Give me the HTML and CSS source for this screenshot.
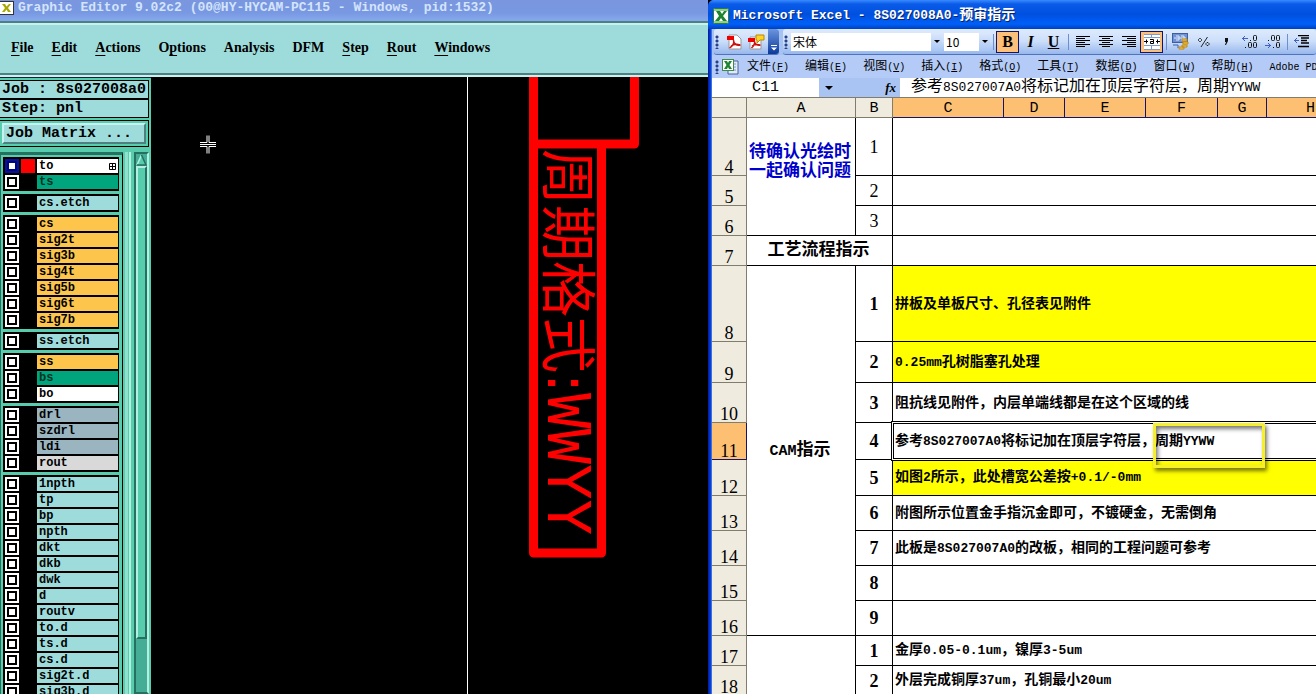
FILE: index.html
```html
<!DOCTYPE html>
<html lang="zh-CN">
<head>
<meta charset="utf-8">
<title>Graphic Editor / Microsoft Excel</title>
<link rel="stylesheet" href="styles.css">
</head>
<body>
<div class="desktop">

<section class="editor">
  <header class="editor-title">
    <svg class="x-icon" viewBox="0 0 14 14" width="14" height="14"><rect width="14" height="14" fill="#333"/><rect width="13" height="12" y="1" fill="#fff"/><path d="M2 3h3l1.500 2.500L9 3h2L8 7l3 4H8L6.500 8.500 4.500 11H2l3-4z" fill="#a8a800"/></svg>
    <span>Graphic Editor 9.02c2 (00@HY-HYCAM-PC115 - Windows, pid:1532)</span>
  </header>
  <nav class="editor-menu">
    <button><u>F</u>ile</button><button><u>E</u>dit</button><button><u>A</u>ctions</button><button>O<u>p</u>tions</button><button>Analysis</button><button>DFM</button><button><u>S</u>tep</button><button><u>R</u>out</button><button><u>W</u>indows</button>
  </nav>
  <div class="editor-body">
    <aside class="side">
      <div class="info">Job : 8s027008a0</div>
      <div class="info">Step: pnl</div>
      <div class="matrix"><button>Job Matrix ...</button></div>
      <div class="layers">
        <div class="list">
          <div class="group">
            <label class="layer active"><input type="checkbox"><i></i><span class="white">to<svg width="7" height="7" viewBox="0 0 7 7"><path d="M.5.5h6v6h-6zM3.500 0v7M0 3.500h7" fill="none" stroke="#000"/></svg></span></label>
            <label class="layer"><input type="checkbox"><i></i><span class="green">ts</span></label>
          </div>
          <div class="group">
            <label class="layer"><input type="checkbox"><i></i><span>cs.etch</span></label>
          </div>
          <div class="group">
            <label class="layer"><input type="checkbox"><i></i><span class="orange">cs</span></label>
            <label class="layer"><input type="checkbox"><i></i><span class="orange">sig2t</span></label>
            <label class="layer"><input type="checkbox"><i></i><span class="orange">sig3b</span></label>
            <label class="layer"><input type="checkbox"><i></i><span class="orange">sig4t</span></label>
            <label class="layer"><input type="checkbox"><i></i><span class="orange">sig5b</span></label>
            <label class="layer"><input type="checkbox"><i></i><span class="orange">sig6t</span></label>
            <label class="layer"><input type="checkbox"><i></i><span class="orange">sig7b</span></label>
          </div>
          <div class="group">
            <label class="layer"><input type="checkbox"><i></i><span>ss.etch</span></label>
          </div>
          <div class="group">
            <label class="layer"><input type="checkbox"><i></i><span class="orange">ss</span></label>
            <label class="layer"><input type="checkbox"><i></i><span class="green">bs</span></label>
            <label class="layer"><input type="checkbox"><i></i><span class="white">bo</span></label>
          </div>
          <div class="group">
            <label class="layer"><input type="checkbox"><i></i><span class="slate">drl</span></label>
            <label class="layer"><input type="checkbox"><i></i><span class="slate">szdrl</span></label>
            <label class="layer"><input type="checkbox"><i></i><span class="slate">ldi</span></label>
            <label class="layer"><input type="checkbox"><i></i><span class="grey">rout</span></label>
          </div>
          <div class="group">
            <label class="layer"><input type="checkbox"><i></i><span>1npth</span></label>
            <label class="layer"><input type="checkbox"><i></i><span>tp</span></label>
            <label class="layer"><input type="checkbox"><i></i><span>bp</span></label>
            <label class="layer"><input type="checkbox"><i></i><span>npth</span></label>
            <label class="layer"><input type="checkbox"><i></i><span>dkt</span></label>
            <label class="layer"><input type="checkbox"><i></i><span>dkb</span></label>
            <label class="layer"><input type="checkbox"><i></i><span>dwk</span></label>
            <label class="layer"><input type="checkbox"><i></i><span>d</span></label>
            <label class="layer"><input type="checkbox"><i></i><span>routv</span></label>
            <label class="layer"><input type="checkbox"><i></i><span>to.d</span></label>
            <label class="layer"><input type="checkbox"><i></i><span>ts.d</span></label>
            <label class="layer"><input type="checkbox"><i></i><span>cs.d</span></label>
            <label class="layer"><input type="checkbox"><i></i><span>sig2t.d</span></label>
            <label class="layer"><input type="checkbox"><i></i><span>sig3b.d</span></label>
          </div>
        </div>
        <div class="stripes"></div>
        <div class="scroll">
          <svg width="11" height="12" viewBox="0 0 11 12"><path d="M5.500 1L1 11h9z" fill="#57cdae"/><path d="M5.500 1L1 11" stroke="#b4f0e2" stroke-width="1.500"/><path d="M5.500 1L10 11H1" fill="none" stroke="#26705f" stroke-width="1.500"/></svg>
          <div class="thumb"></div>
          <div class="trough"></div>
        </div>
      </div>
    </aside>
    <div class="canvas">
      <svg width="100%" height="100%">
        <path d="M316.500 0V700" stroke="#fff"/>
        <path d="M382.500 0V476H450.500V67M378 67H483.500V0" fill="none" stroke="#f00" stroke-width="9" stroke-linejoin="round"/>
        <text class="cad" transform="translate(397 72) rotate(90)"><tspan class="han">周期格式</tspan><tspan class="colon">:</tspan><tspan class="code">WWYY</tspan></text>
        <path d="M49 65.500h7v-7M49 67.500h16M49 69.500h7v7M65 65.500h-7v-7M65 69.500h-7v7M57 58.500" fill="none" stroke="#fff"/>
      </svg>
    </div>
  </div>
</section>

<section class="excel">
  <header class="excel-title">
    <svg width="16" height="16" viewBox="0 0 16 16"><rect x=".5" y=".5" width="15" height="15" rx="1" fill="#fff" stroke="#2f7d3a"/><path d="M1 1h14v2H1zM1 13h14v2H1z" fill="#8fcf94"/><path d="M3 3h4l2 3 2-3h3l-4 5 4 5h-4l-2-3-2 3H2l4-5z" fill="#1d8430"/></svg>
    <h1><span class="lat">Microsoft Excel - 8S027008A0-</span>预审指示</h1>
  </header>
  <div class="toolbar">
    <div class="bar pdf-bar">
      <b class="grip"></b>
      <button class="tool" aria-label="PDF"><svg width="16" height="16" viewBox="0 0 16 16"><path d="M3 1h8l4 4v10H3z" fill="#fff" stroke="#999"/><path d="M1 2h7v4H1z" fill="#e00"/><path d="M7.500 6c1 3-1 6-4 8M7.500 7c1 3 3 5 7 4M5 12c3-2 6-2 9-1" fill="none" stroke="#c11" stroke-width="1.500"/></svg></button>
      <button class="tool" aria-label="PDF comment"><svg width="17" height="16" viewBox="0 0 17 16"><path d="M2 3h8l3 3v9H2z" fill="#fff" stroke="#999"/><path d="M0 4h7v4H0z" fill="#e00"/><path d="M6.500 7c1 3-1 5-3 7M6.500 8c1 2 2 4 6 3M4 12c3-2 5-2 8-1" fill="none" stroke="#c11" stroke-width="1.500"/><path d="M9 1h7v5h-4l-3 3V6H8V1z" fill="#fdd32a" stroke="#b58a00"/></svg></button>
      <button class="more" aria-label="More"><svg width="6" height="6" viewBox="0 0 6 6"><path d="M0 0h6v1H0zM0 2.500h6L3 5.500z" fill="#fff"/></svg></button>
    </div>
    <div class="bar format-bar">
      <b class="grip"></b>
      <span class="combo font"><select aria-label="Font"><option>宋体</option></select><em></em></span>
      <span class="combo size"><select aria-label="Font size"><option>10</option></select><em></em></span>
      <hr>
      <button class="tool on letter">B</button>
      <button class="tool letter italic">I</button>
      <button class="tool letter under">U</button>
      <hr>
      <button class="tool" aria-label="Left"><svg width="14" height="13" viewBox="0 0 14 13"><path d="M0 1.500h14M0 3.500h9M0 5.500h14M0 7.500h9M0 9.500h14M0 11.500h9" stroke="#000"/></svg></button>
      <button class="tool" aria-label="Center"><svg width="14" height="13" viewBox="0 0 14 13"><path d="M0 1.500h14M3 3.500h8M0 5.500h14M3 7.500h8M0 9.500h14M3 11.500h8" stroke="#000"/></svg></button>
      <button class="tool" aria-label="Right"><svg width="14" height="13" viewBox="0 0 14 13"><path d="M0 1.500h14M5 3.500h9M0 5.500h14M5 7.500h9M0 9.500h14M5 11.500h9" stroke="#000"/></svg></button>
      <button class="tool on" aria-label="Merge"><svg width="16" height="16" viewBox="0 0 16 16"><rect width="16" height="16" fill="#7f9bc8"/><path d="M0 1h7v2H0zM8 1h8v2H8zM0 4h16v7H0zM0 12h7v3H0zM8 12h8v3H8z" fill="#fff"/><path d="M0 7.500h4M12 7.500h4M2.500 5.500v4M13.500 5.500v4M6 5.500h3.500v4H6.500v-2h3" fill="none" stroke="#000"/></svg></button>
      <hr>
      <button class="tool" aria-label="Currency"><svg width="17" height="17" viewBox="0 0 17 17"><rect x=".5" y=".5" width="15" height="9" fill="#6f92d2" stroke="#3c5ea8"/><path d="M4 3h3v4H4M9 3h3v4H9M2 5h12" fill="none" stroke="#dfe9fb"/><path d="M1 12h5v3" fill="none" stroke="#3c5ea8"/><path d="M10 6h5v2h-5zM11 9h5v2h-5zM10 12h5v2h-5zM7 14h5v2H7z" fill="#f6cb45" stroke="#c28a12"/></svg></button>
      <button class="tool" aria-label="Percent"><svg width="12" height="12" viewBox="0 0 12 12"><path d="M9.500 1L3 11M1.500 2.500h1l1 1v1l-1 1h-1l-1-1v-1zM9 6.500h1l1 1v1l-1 1H9l-1-1v-1z" fill="none" stroke="#222"/></svg></button>
      <button class="tool" aria-label="Comma"><svg width="5" height="7" viewBox="0 0 5 7"><path d="M1 0h3v3L2 7H1l1-3H1z" fill="#111"/></svg></button>
      <button class="tool" aria-label="Increase decimal"><svg width="16" height="14" viewBox="0 0 16 14"><path d="M0 3.500h6M3 1L.5 3.500 3 6" fill="none" stroke="#3b62c4"/><path d="M8 5h1v1H8zM3 12h1v1H3z" fill="#111"/><rect x="11.500" y=".5" width="3" height="5" rx="1" fill="none" stroke="#111"/><rect x="6.500" y="7.500" width="3" height="5" rx="1" fill="none" stroke="#111"/><rect x="11.500" y="7.500" width="3" height="5" rx="1" fill="none" stroke="#111"/></svg></button>
      <button class="tool" aria-label="Decrease decimal"><svg width="16" height="14" viewBox="0 0 16 14"><path d="M0 10.500h6M3 8l2.500 2.500L3 13" fill="none" stroke="#3b62c4"/><path d="M3 5h1v1H3zM8 12h1v1H8z" fill="#111"/><rect x="6.500" y=".5" width="3" height="5" rx="1" fill="none" stroke="#111"/><rect x="11.500" y=".5" width="3" height="5" rx="1" fill="none" stroke="#111"/><rect x="11.500" y="7.500" width="3" height="5" rx="1" fill="none" stroke="#111"/></svg></button>
      <hr>
      <button class="tool" aria-label="Decrease indent"><svg width="16" height="13" viewBox="0 0 16 13"><path d="M0 5.500h5M3 3L.5 5.500 3 8" fill="none" stroke="#3b62c4"/><path d="M4 .5h11M7 3h8M7 5.500h6M7 8h8M4 11.500h11" stroke="#000" stroke-width="1.500"/></svg></button>
    </div>
  </div>
  <nav class="excel-menu">
    <b class="grip"></b>
    <svg width="17" height="16" viewBox="0 0 17 16"><path d="M8 2h8v13H6v-3" fill="#dfe9fb" stroke="#4a6296"/><path d="M10 5h4M10 8h4M10 11h4" stroke="#7f98c8"/><rect x=".5" y=".5" width="11" height="11" fill="#fff" stroke="#3d8b46"/><path d="M2 2h3l1 2 1-2h3L7.500 6 10 10H7L6 8l-1 2H2l2.500-4z" fill="#1d8430"/></svg>
    <button>文件<span>(<u>F</u>)</span></button><button>编辑<span>(<u>E</u>)</span></button><button>视图<span>(<u>V</u>)</span></button><button>插入<span>(<u>I</u>)</span></button><button>格式<span>(<u>O</u>)</span></button><button>工具<span>(<u>T</u>)</span></button><button>数据<span>(<u>D</u>)</span></button><button>窗口<span>(<u>W</u>)</span></button><button>帮助<span>(<u>H</u>)</span></button><button><span>Adobe PDF</span></button>
  </nav>
  <div class="formula">
    <input class="name" aria-label="Name box" value="C11">
    <div class="fx-area"><i class="arrow"></i><i class="fx">fx</i></div>
    <div class="fx-text" role="textbox" aria-label="Formula">参考<span class="lat">8S027007A0</span>将标记加在顶层字符层，周期<span class="lat">YYWW</span></div>
  </div>
  <div class="sheet">
    <table>
      <colgroup><col class="c-row"><col class="c-a"><col class="c-b"><col class="c-c"><col class="c-d"><col class="c-e"><col class="c-f"><col class="c-g"><col class="c-h"></colgroup>
      <thead><tr><th></th><th>A</th><th>B</th><th class="sel">C</th><th class="sel">D</th><th class="sel">E</th><th class="sel">F</th><th class="sel">G</th><th class="sel">H</th></tr></thead>
      <tbody>
        <tr class="h58"><th>4</th><td rowspan="3" class="group-name blue">待确认光绘时一起确认问题</td><td class="no thin">1</td><td colspan="6"></td></tr>
        <tr class="h30"><th>5</th><td class="no thin">2</td><td colspan="6"></td></tr>
        <tr class="h30"><th>6</th><td class="no thin">3</td><td colspan="6"></td></tr>
        <tr class="h30"><th>7</th><td colspan="2" class="group-name">工艺流程指示</td><td colspan="6"></td></tr>
        <tr class="h76"><th>8</th><td rowspan="9" class="group-name"><span class="lat-big">CAM</span>指示</td><td class="no">1</td><td colspan="6" class="yellow">拼板及单板尺寸、孔径表见附件</td></tr>
        <tr class="h41"><th>9</th><td class="no">2</td><td colspan="6" class="yellow"><span class="lat">0.25mm</span>孔树脂塞孔处理</td></tr>
        <tr class="h40"><th>10</th><td class="no">3</td><td colspan="6">阻抗线见附件，内层单端线都是在这个区域的线</td></tr>
        <tr class="h37"><th class="sel">11</th><td class="no">4</td><td colspan="6" class="current">参考<span class="lat">8S027007A0</span>将标记加在顶层字符层，周期<span class="lat">YYWW</span><div class="marker"></div></td></tr>
        <tr class="h36"><th>12</th><td class="no">5</td><td colspan="6" class="yellow">如图<span class="lat">2</span>所示，此处槽宽公差按<span class="lat">+0.1/-0mm</span></td></tr>
        <tr class="h35"><th>13</th><td class="no">6</td><td colspan="6">附图所示位置金手指沉金即可，不镀硬金，无需倒角</td></tr>
        <tr class="h35"><th>14</th><td class="no">7</td><td colspan="6">此板是<span class="lat">8S027007A0</span>的改板，相同的工程问题可参考</td></tr>
        <tr class="h35"><th>15</th><td class="no">8</td><td colspan="6"></td></tr>
        <tr class="h35"><th>16</th><td class="no">9</td><td colspan="6"></td></tr>
        <tr class="h30"><th>17</th><td rowspan="2"></td><td class="no">1</td><td colspan="6">金厚<span class="lat">0.05-0.1um</span>，镍厚<span class="lat">3-5um</span></td></tr>
        <tr class="h30"><th>18</th><td class="no">2</td><td colspan="6">外层完成铜厚<span class="lat">37um</span>，孔铜最小<span class="lat">20um</span></td></tr>
      </tbody>
    </table>
  </div>
</section>

</div>
</body>
</html>
```
FILE: styles.css
```css
* { box-sizing: border-box; }
body { margin: 0; background: #000; }
button, input, select { font: inherit; color: inherit; margin: 0; padding: 0; border: 0; background: none; border-radius: 0; }
svg { display: block; flex: none; }
.desktop { display: grid; grid-template-columns: 708fr 608fr; height: 100vh; overflow: hidden; }
.editor, .excel { display: flex; flex-direction: column; min-width: 0; min-height: 0; overflow: hidden; }

/* graphic editor */
.editor { font-family: "Liberation Mono", monospace; color: #000; }
.editor-title { display: flex; gap: 4px; height: 21px; padding-top: 1px; flex: none; font-size: 13px; font-weight: 700; line-height: 14px; color: #d4e4fb; white-space: nowrap; background: linear-gradient(#7a96df, #7898e2 60%, #86a9ec); }
.editor-menu { display: flex; align-items: center; gap: 18px; height: 54px; padding: 0 11px; flex: none; white-space: nowrap; background: #9edcdc; border-top: 2px solid #4f8080; border-bottom: 2px solid #4f8080; box-shadow: inset 0 2px #c8f2f2; font: 700 14px/20px "Liberation Serif", serif; }
.editor-menu u { text-underline-offset: 3px; }
.editor-body { display: flex; flex: 1; min-height: 0; border-top: 2px solid #c8f2f2; }
.side { display: flex; flex-direction: column; width: 151px; flex: none; padding-top: 2px; background: #57cdae; border-top: 1px solid #123; }
.info { height: 19px; margin-right: 2px; padding-left: 2px; border: 1px solid #000; border-left: 0; background: #9edcdc; font-size: 15px; font-weight: 700; line-height: 17px; white-space: nowrap; }
.matrix { margin: 2px 2px 4px 0; padding: 2px; height: 27px; border: 1px solid #000; border-left: 0; }
.matrix button { display: block; width: 100%; height: 21px; padding-left: 2px; text-align: left; background: #9edcdc; border: 2px solid; border-color: #c8f2f2 #4f8080 #4f8080 #c8f2f2; font-size: 15px; font-weight: 700; line-height: 17px; }
.layers { display: flex; flex: 1; min-height: 0; border-top: 1px solid #57cdae; }
.list { display: flex; flex-direction: column; gap: 3px; width: 123px; flex: none; padding: 2px 3px 0 2px; overflow: hidden; border-top: 3px solid #26705f; border-left: 1px solid #26705f; border-right: 1px solid #000; }
.group { flex: none; padding: 1px 0; background: #000; }
.layer { display: flex; height: 16px; padding: 1px 1px 1px 2px; }
.layer input { appearance: none; width: 14px; height: 14px; flex: none; border: 2px solid #fff; background: #fff; box-shadow: inset 0 0 0 2px #000; }
.layer i { width: 14px; margin: 0 2px; flex: none; }
.layer span { display: flex; flex: 1; align-items: center; justify-content: space-between; padding: 0 2px; overflow: hidden; background: #9edcdc; font-size: 12px; font-weight: 700; line-height: 14px; }
.layer.active input { border-color: #0a0f9c; box-shadow: inset 0 0 0 2px #000878; }
.layer.active i { background: #f00; }
.layer .white { background: #fff; }
.layer .green { background: #00a57e; color: #032; }
.layer .orange { background: #fdc54c; }
.layer .slate { background: #9ab5bf; }
.layer .grey { background: #d9d9d9; }
.stripes { width: 11px; flex: none; background: linear-gradient(90deg, #57cdae 2px, #8fe0cc 2px 5px, #57cdae 5px 6px, #b4f0e2 6px 8px, #57cdae 8px); }
.scroll { display: flex; flex-direction: column; width: 15px; flex: none; border: 2px solid; border-color: #26705f #b4f0e2 #26705f #26705f; background: #45ad95; }
.thumb { flex: 477; background: #57cdae; border: 2px solid; border-color: #b4f0e2 #26705f #26705f #b4f0e2; }
.trough { flex: 54; }
.canvas { flex: 1; min-width: 0; overflow: hidden; background: #000; }
.cad { fill: #f00; }
.cad .han { font: 400 56px "Noto Sans CJK SC", sans-serif; }
.cad .colon { font: 400 59px "DejaVu Sans", sans-serif; }
.cad .code { font: 400 59px "DejaVu Sans Mono", monospace; }

/* spreadsheet */
.excel { padding-left: 4px; background: linear-gradient(90deg, #0019a0, #0a4ae0 3px, #6d96ea 4px); border-top-left-radius: 6px; font-family: "Liberation Mono", "Noto Sans CJK SC", monospace; color: #000; }
.lat { font-size: 13px; }
.lat-big { font-size: 15px; }
.excel-title { display: flex; align-items: center; gap: 4px; height: 29px; flex: none; margin-left: -4px; padding: 2px 0 0 5px; background: linear-gradient(#3a8bff, #0a5be8 4px, #0050e0 50%, #0060f8 24px, #0040c0); color: #fff; }
.excel-title h1 { margin: 0; font-size: 14px; line-height: 20px; white-space: nowrap; text-shadow: 1px 1px #06246e; }
.toolbar { display: flex; gap: 4px; height: 26px; flex: none; padding-left: 2px; background: #a6c2f3; }
.bar { display: flex; align-items: center; height: 26px; background: linear-gradient(#dfebfd, #cbdefa 50%, #97b7ec); border-bottom: 1px solid #4f74bd; border-radius: 3px; }
.pdf-bar { width: 65px; flex: none; }
.format-bar { flex: 1; min-width: 0; overflow: hidden; }
.grip { width: 8px; height: 14px; flex: none; background: radial-gradient(circle at 3px 2px, #27408b 1px, transparent 2px) 0 0 / 8px 4px; }
.tool { display: flex; align-items: center; justify-content: center; width: 23px; height: 22px; flex: none; }
.tool.on { background: #fdc07a; border: 1px solid #14146a; }
.letter { font: 700 16px "Liberation Serif", serif; }
.italic { font-style: italic; }
.under { text-decoration: underline; }
.more { display: flex; align-items: flex-end; justify-content: center; align-self: stretch; width: 11px; padding-bottom: 3px; background: linear-gradient(#6d95dd, #0b3a9c); border-radius: 0 3px 3px 0; }
.combo { display: flex; height: 18px; flex: none; background: #fff; }
.combo select { appearance: none; flex: 1; min-width: 0; padding-left: 2px; font: 12px "Noto Sans CJK SC", sans-serif; }
.combo em, .arrow { display: flex; align-items: center; justify-content: center; width: 11px; flex: none; }
.combo em { background: linear-gradient(#dbe8fc, #a8c6f4); }
.combo em::before, .arrow::before { content: ""; border: 3px solid transparent; border-top-color: #000; border-bottom: 0; }
.arrow::before { border-width: 4px; border-bottom: 0; }
.font { width: 151px; margin-right: 2px; }
.size { width: 46px; }
.format-bar hr { width: 1px; height: 16px; flex: none; margin: 0 2px 0 3px; border: 0; background: #6d8fd0; }
.excel-menu { display: flex; align-items: center; height: 23px; flex: none; padding-left: 2px; background: #b3cbf6; white-space: nowrap; font: 12px/18px "Noto Sans CJK SC", sans-serif; }
.excel-menu svg { margin-right: 8px; }
.excel-menu button { flex: none; margin-right: 16px; }
.excel-menu span { font-family: "Liberation Mono", monospace; font-size: 10px; }
.formula { display: flex; height: 19px; flex: none; background: #fff; font-size: 16px; line-height: 19px; white-space: nowrap; }
.formula .name { width: 107px; flex: none; text-align: center; font-size: 15px; }
.fx-area { display: flex; justify-content: space-between; align-items: center; width: 81px; flex: none; padding: 0 4px; background: #a9c4f3; }
.fx { font: italic 700 13px "Liberation Serif", serif; }
.fx-text { flex: 1; min-width: 0; padding-left: 11px; overflow: hidden; }
.sheet { flex: 1; min-height: 0; overflow: hidden; background: #fff; border-top: 1px solid #807d6c; }
table { width: 643px; table-layout: fixed; border-collapse: separate; border-spacing: 0; }
.c-row { width: 35px; } .c-a { width: 109px; } .c-b { width: 37px; } .c-c { width: 111px; } .c-d { width: 61px; }
.c-e { width: 81px; } .c-f { width: 72px; } .c-g { width: 49px; } .c-h { width: 88px; }
th, td { padding: 0; border: 0 solid #000; border-width: 0 1px 1px 0; }
th { background: #efebde; border-color: #807d6c; font-weight: 400; font-size: 15px; line-height: 16px; }
thead th { height: 20px; vertical-align: bottom; }
tbody th { vertical-align: bottom; font: 18px/16px "Liberation Serif", serif; }
th.sel { background: #fdc073; border-color: #14146a; }
td { padding-left: 2px; vertical-align: middle; font-size: 14px; font-weight: 700; line-height: 16px; white-space: nowrap; }
.h30 { height: 30px; } .h35 { height: 35px; } .h36 { height: 36px; } .h37 { height: 37px; } .h40 { height: 40px; }
.h41 { height: 41px; } .h58 { height: 58px; } .h76 { height: 76px; }
.no { padding: 0; text-align: center; font: 700 18px/18px "Liberation Serif", serif; }
.no.thin { font-weight: 400; }
.group-name { padding: 0 2px 0 0; text-align: center; font-size: 17px; line-height: 19px; white-space: normal; }
.group-name.blue { padding-bottom: 30px; color: #0000cd; }
.yellow { background: #ff0; }
.current { position: relative; }
.current::after { content: ""; position: absolute; inset: -2px 0 -2px -2px; border: 1px solid #000; box-shadow: inset 0 0 0 1px #fff, inset 0 0 0 2px #000; }
.marker { position: absolute; z-index: 1; left: 260px; top: 0; width: 112px; height: 45px; border: 3px solid #f6f02a; box-shadow: 2px 3px 4px #0008, inset 2px 3px 4px #0008; }
```
